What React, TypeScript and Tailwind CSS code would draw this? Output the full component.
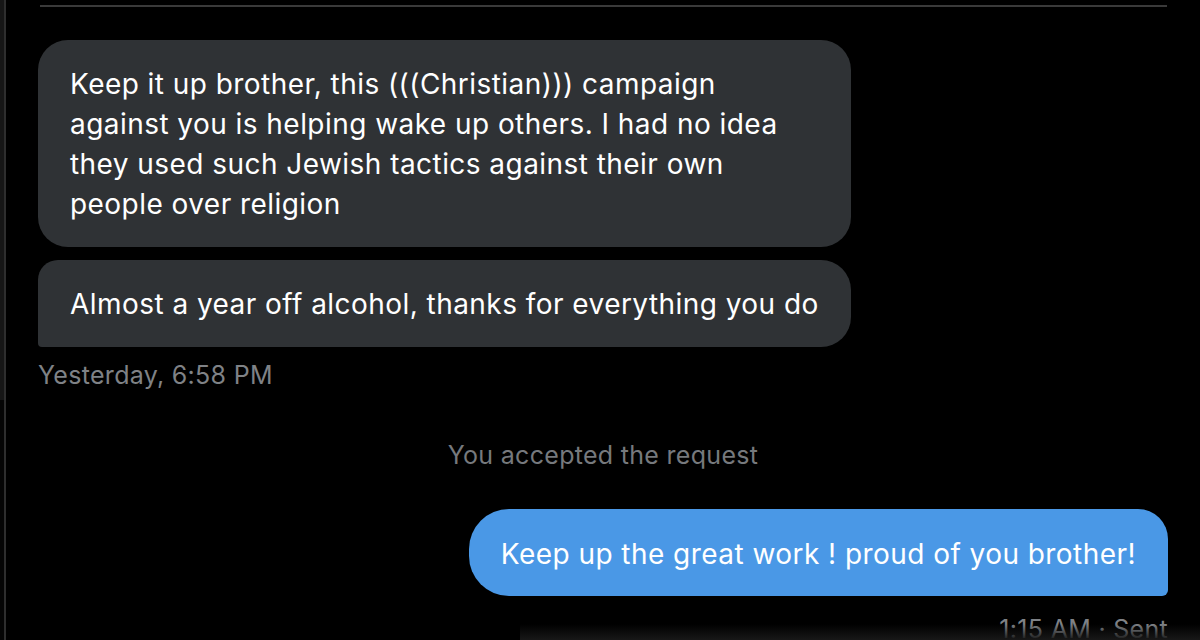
import React from "react";

export default function App() {
  const font = { fontFamily: 'Inter, "Liberation Sans", Arial, sans-serif' };
  return (
    <div className="relative w-[1200px] h-[640px] overflow-hidden bg-black flex" style={font}>
      <div className="w-[4px] h-full flex flex-col">
        <div className="h-[400px] bg-[#161616]" />
        <div className="flex-1 bg-[#050505]" />
      </div>
      <div className="w-[2px] h-full bg-[#2e2e2e]" />
      <div className="flex-1 flex flex-col">
        <div className="pt-[5px] pl-[34px] pr-[33px]">
          <div className="h-[2px] bg-[#3a3a3a]" />
        </div>
        <div className="flex flex-col pl-[32px] pr-[32px] pt-[33px]">
          <div className="self-start w-[813px] bg-[#2f3235] rounded-[30px] px-[32px] pt-[24px] pb-[23px] text-white text-[28px] leading-[40px] tracking-[0.45px] whitespace-nowrap">
            Keep it up brother, this (((Christian))) campaign
            <br />
            against you is helping wake up others. I had no idea
            <br />
            they used such Jewish tactics against their own
            <br />
            people over religion
          </div>
          <div className="self-start mt-[13px] w-[813px] bg-[#2f3235] rounded-tl-[20px] rounded-tr-[30px] rounded-br-[30px] rounded-bl-[4px] px-[32px] pt-[24px] pb-[23px] text-white text-[28px] leading-[40px] tracking-[0.45px] whitespace-nowrap">
            Almost a year off alcohol, thanks for everything you do
          </div>
          <div className="mt-[13px] text-[#7f8286] text-[25px] leading-[30px] tracking-[0.3px]">Yesterday, 6:58 PM</div>
          <div className="mt-[50px] text-center text-[#76797d] text-[25px] leading-[30px] tracking-[0.3px]">You accepted the request</div>
          <div className="self-end mt-[39px] bg-[#4a98e6] rounded-l-[40px] rounded-tr-[30px] rounded-br-[6px] px-[32px] pt-[25px] pb-[21px] text-white text-[28px] leading-[41px] tracking-[0.45px] whitespace-nowrap">
            Keep up the great work ! proud of you brother!
          </div>
          <div className="self-end mt-[18px] text-[#7f8286] text-[25px] leading-[30px] tracking-[0.3px]">1:15 AM · Sent</div>
        </div>
      </div>
      <div className="absolute left-[520px] right-0 bottom-0 h-[16px] bg-gradient-to-b from-transparent to-[#181818] pointer-events-none" />
    </div>
  );
}
